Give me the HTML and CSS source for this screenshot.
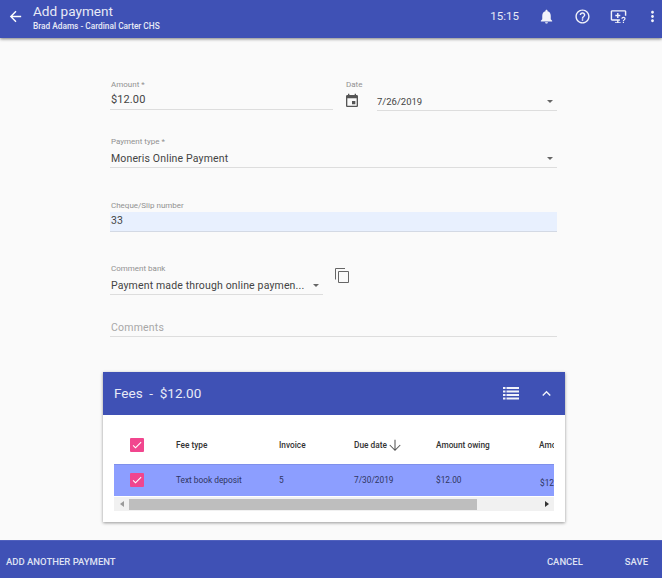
FILE: index.html
```html
<!DOCTYPE html>
<html lang="en">
<head>
	<meta charset="UTF-8">
	<title>Add payment</title>
	<link rel="stylesheet" href="styles.css">
</head>
<body>
	<div class="page">
		<header class="topbar">
			<svg class="back" viewBox="0 0 24 24"><path d="M20 11H7.83l5.59-5.59L12 4l-8 8 8 8 1.41-1.41L7.83 13H20v-2z"/></svg>
			<div class="titles">
				<div class="title">Add payment</div>
				<div class="subtitle">Brad Adams - Cardinal Carter CHS</div>
			</div>
			<div class="clock">15:15</div>
			<svg class="topicon" viewBox="0 0 24 24"><path d="M12 22c1.1 0 2-.9 2-2h-4c0 1.1.9 2 2 2zm6-6v-5c0-3.07-1.63-5.64-4.5-6.32V4c0-.83-.67-1.5-1.5-1.5s-1.5.67-1.5 1.5v.68C7.64 5.36 6 7.92 6 11v5l-2 2v1h16v-1l-2-2z"/></svg>
			<svg class="topicon" viewBox="0 0 24 24"><path d="M11 18h2v-2h-2v2zm1-16C6.48 2 2 6.48 2 12s4.48 10 10 10 10-4.48 10-10S17.52 2 12 2zm0 18c-4.41 0-8-3.59-8-8s3.59-8 8-8 8 3.59 8 8-3.59 8-8 8zm0-14c-2.21 0-4 1.79-4 4h2c0-1.1.9-2 2-2s2 .9 2 2c0 2-3 1.75-3 5h2c0-2.25 3-2.5 3-5 0-2.21-1.79-4-4-4z"/></svg>
			<svg class="topicon" viewBox="0 0 24 24"><path d="M3 3h18c1.1 0 2 .9 2 2v6h-2V5H3v11h11v2h-2v2h3v1H7v-1h3v-2H3c-1.1 0-2-.9-2-2V5c0-1.1.9-2 2-2z"/><path d="M10 7h2v2.5h2.5v2H12V14h-2v-2.5H7.5v-2H10z"/><path d="M19 12.5c-1.7 0-3 1.1-3 2.7h1.7c0-.6.5-1.1 1.3-1.1s1.300.4 1.300 1c0 1.200-2.200 1.200-2.200 3.400h1.700c0-1.500 2.200-1.700 2.200-3.500 0-1.500-1.300-2.500-3-2.500zM18.100 19.300h1.700V21h-1.700z"/></svg>
			<svg class="topicon last" viewBox="0 0 24 24"><path d="M12 8c1.1 0 2-.9 2-2s-.9-2-2-2-2 .9-2 2 .9 2 2 2zm0 2c-1.1 0-2 .9-2 2s.9 2 2 2 2-.9 2-2-.9-2-2-2zm0 6c-1.1 0-2 .9-2 2s.9 2 2 2 2-.9 2-2-.9-2-2-2z"/></svg>
		</header>

		<main class="content">
			<div class="form">
				<div class="row first">
					<div class="field amount">
						<div class="label">Amount *</div>
						<div class="value">$12.00</div>
					</div>
					<div class="datefield">
						<div class="label">Date</div>
						<div class="daterow">
							<svg class="calicon" viewBox="0 0 24 24"><path d="M17 12h-5v5h5v-5zM16 1v2H8V1H6v2H5c-1.11 0-1.99.9-1.99 2L3 19c0 1.1.89 2 2 2h14c1.1 0 2-.9 2-2V5c0-1.1-.9-2-2-2h-1V1h-2zm3 18H5V8h14v11z"/></svg>
							<div class="select dateselect"><span>7/26/2019</span><i class="caret"></i></div>
						</div>
					</div>
				</div>

				<div class="field paytype">
					<div class="label">Payment type *</div>
					<div class="select"><span>Moneris Online Payment</span><i class="caret"></i></div>
				</div>

				<div class="field cheque">
					<div class="label">Cheque/Slip number</div>
					<div class="value filled">33</div>
				</div>

				<div class="row bank">
					<div class="field bankfield">
						<div class="label">Comment bank</div>
						<div class="select"><span>Payment made through online paymen...</span><i class="caret"></i></div>
					</div>
					<svg class="copyicon" viewBox="0 0 15 15"><path d="M.5 11.5V.5H10"/><path d="M3.5 3.5h10v11h-10z"/></svg>
				</div>

				<div class="comments">Comments</div>
			</div>

			<section class="card">
				<div class="cardhead">
					<div class="cardtitle">Fees &nbsp;-&nbsp; $12.00</div>
					<svg class="listicon" viewBox="0 0 16 13"><path d="M0 0h2.5v2H0zM3.5 0H16v2H3.5zM0 3.500h2.500v2H0zM3.500 3.500H16v2H3.500zM0 7h2.500v2H0zM3.500 7H16v2H3.500zM0 10.500h2.500v2H0zM3.500 10.500H16v2H3.500z"/></svg>
					<svg class="chevron" viewBox="0 0 24 24"><path d="M12 8l-6 6 1.41 1.41L12 10.83l4.59 4.58L18 14z"/></svg>
				</div>
				<div class="tablewrap">
					<div class="tr thead">
						<div class="c-check"><span class="check"><svg viewBox="0 0 24 24"><path d="M9 16.2L4.8 12l-1.4 1.4L9 19 21 7l-1.4-1.4z"/></svg></span></div>
						<div class="c-type">Fee type</div>
						<div class="c-inv">Invoice</div>
						<div class="c-due">Due date <svg class="sort" viewBox="0 0 24 24"><path d="M12 3v18M3 12l9 9 9-9"/></svg></div>
						<div class="c-owing">Amount owing</div>
						<div class="c-amt">Amount</div>
					</div>
					<div class="tr tbody">
						<div class="c-check"><span class="check"><svg viewBox="0 0 24 24"><path d="M9 16.2L4.8 12l-1.4 1.4L9 19 21 7l-1.4-1.4z"/></svg></span></div>
						<div class="c-type">Text book deposit</div>
						<div class="c-inv">5</div>
						<div class="c-due">7/30/2019</div>
						<div class="c-owing">$12.00</div>
						<div class="c-amt lower">$12.00</div>
					</div>
					<div class="scrollbar">
						<i class="arrow left"></i>
						<div class="track"><div class="thumb"></div></div>
						<i class="arrow right"></i>
					</div>
				</div>
			</section>
		</main>

		<footer class="bottombar">
			<div class="btn">ADD ANOTHER PAYMENT</div>
			<div class="spacer"></div>
			<div class="btn">CANCEL</div>
			<div class="btn save">SAVE</div>
		</footer>
	</div>
</body>
</html>
```

FILE: styles.css
```css
*{
	box-sizing: border-box;
}
body{
	margin: 0;
	font-family: Roboto, "Liberation Sans", sans-serif;
	background-color: #fafafa;
	color: #333;
}
.page{
	width: 662px;
	height: 578px;
	overflow: hidden;
	display: flex;
	flex-direction: column;
}
.topbar{
	height: 38px;
	flex: none;
	display: flex;
	align-items: center;
	background-color: #3f51b5;
	color: #fff;
	box-shadow: 0 1px 3px rgba(0,0,0,0.5);
	position: relative;
	padding: 0 0 6px 7px;
}
.back{
	width: 17px;
	height: 17px;
	fill: #fff;
}
.titles{
	margin-left: 9px;
	flex: 1;
	margin-top: 2px;
}
.title{
	font-size: 13.6px;
	line-height: 17px;
	color: #e8eaf6;
}
.subtitle{
	font-size: 8.3px;
	line-height: 9px;
	margin-top: 2px;
	font-weight: 500;
	color: #e8eaf6;
}
.clock{
	font-size: 11.5px;
	color: #e8eaf6;
	margin-right: 15px;
}
.topicon{
	width: 17px;
	height: 17px;
	fill: #f2f3fa;
	margin-left: 19px;
}
.clock + .topicon{
	margin-left: 4px;
}
.topicon.last{
	margin-left: 17px;
	margin-right: 1px;
}
.content{
	flex: 1;
	padding: 0 97px 0 103px;
}
.form{
	padding: 40px 8px 0 7px;
}
.row{
	display: flex;
}
.label{
	font-size: 8px;
	line-height: 10px;
	color: #919191;
	padding-left: 1px;
}
.value{
	font-size: 11px;
	line-height: 15px;
	color: #444;
	letter-spacing: 0.1px;
	padding-left: 1px;
}
.first{
	height: 30px;
	margin-top: 2px;
}
.amount{
	width: 223px;
	border-bottom: 1px solid #ddd;
}
.amount .value{
	margin-top: 2px;
}
.datefield{
	margin-left: 12px;
	flex: 1;
}
.daterow{
	display: flex;
	align-items: flex-start;
}
.calicon{
	width: 16px;
	height: 16px;
	fill: #555;
	flex: none;
	margin: 3px 17px 0 -1px;
}
.select{
	height: 17px;
	border-bottom: 1px solid #ddd;
	display: flex;
	align-items: center;
	justify-content: space-between;
	font-size: 10.5px;
	line-height: 15px;
	color: #444;
	letter-spacing: 0.15px;
	padding: 0 4px 0 1px;
}
.dateselect{
	flex: 1;
	height: 19px;
	margin-top: 2px;
	font-size: 9.5px;
	letter-spacing: 0;
	padding-left: 0;
}
.caret{
	width: 0;
	height: 0;
	border-left: 3.5px solid transparent;
	border-right: 3.5px solid transparent;
	border-top: 3.5px solid #666;
}
.paytype{
	margin-top: 27px;
}
.paytype .select{
	height: 18px;
	margin-top: 3px;
}
.cheque{
	margin-top: 33px;
}
.filled{
	background-color: #e8f0fe;
	border-bottom: 1px solid #d3d9e4;
	height: 20px;
	line-height: 18px;
	margin-top: 1px;
	font-size: 10.5px;
}
.bank{
	margin-top: 32px;
}
.bankfield{
	width: 213px;
}
.bankfield .select{
	margin-top: 2px;
	height: 19px;
}
.copyicon{
	width: 15px;
	height: 15px;
	fill: none;
	stroke: #666;
	stroke-width: 1;
	margin: 4px 0 0 12px;
}
.comments{
	margin-top: 26px;
	height: 16px;
	font-size: 10.5px;
	line-height: 14px;
	letter-spacing: 0.2px;
	color: #a8a8a8;
	border-bottom: 1px solid #ddd;
	padding-left: 1px;
}
.card{
	margin-top: 35px;
	width: 462px;
	height: 150px;
	background-color: #fff;
	box-shadow: 0 1px 3px rgba(0,0,0,0.4);
}
.cardhead{
	height: 43px;
	background-color: #3f51b5;
	color: #e8eaf6;
	display: flex;
	align-items: center;
	padding: 0 10px 1px 11px;
}
.cardtitle{
	flex: 1;
	font-size: 13.5px;
}
.listicon{
	width: 16px;
	height: 13px;
	fill: #f2f3fa;
	margin-right: 19px;
}
.chevron{
	width: 17px;
	height: 17px;
	fill: #f2f3fa;
}
.tablewrap{
	margin: 0 11px;
	width: 440px;
	overflow: hidden;
	padding-top: 10px;
}
.tr{
	display: flex;
	align-items: center;
	font-size: 8.3px;
	color: #333;
	white-space: nowrap;
}
.thead{
	height: 39px;
	font-weight: 500;
}
.tbody{
	height: 32px;
	background-color: #8c9eff;
	border-top: 1px solid #7f90ea;
	color: #2f3560;
	padding-bottom: 1px;
}
.c-check{
	width: 62px;
	flex: none;
	padding-left: 16px;
	display: flex;
}
.c-type{
	width: 103px;
	flex: none;
}
.c-inv{
	width: 75px;
	flex: none;
}
.c-due{
	width: 82px;
	flex: none;
	display: flex;
	align-items: center;
}
.c-owing{
	width: 103px;
	flex: none;
}
.c-amt{
	width: 60px;
	flex: none;
}
.lower{
	padding: 6px 0 0 1px;
}
.sort{
	width: 14px;
	height: 14px;
	fill: none;
	stroke: #555;
	stroke-width: 1.8;
	margin-left: 1px;
}
.check{
	width: 14px;
	height: 14px;
	background-color: #f1468e;
	border-radius: 1px;
	display: flex;
}
.check svg{
	width: 14px;
	height: 14px;
	fill: #fff;
	padding: 1px;
}
.scrollbar{
	height: 14px;
	display: flex;
	align-items: center;
	background-color: #f1f1f1;
	margin-top: 1px;
}
.arrow{
	width: 15px;
	flex: none;
	display: flex;
	justify-content: center;
}
.arrow::before{
	content: "";
	border-top: 3.5px solid transparent;
	border-bottom: 3.5px solid transparent;
}
.arrow.left::before{
	border-right: 4px solid #9a9a9a;
}
.arrow.right::before{
	border-left: 4px solid #333;
}
.track{
	flex: 1;
	height: 11px;
}
.thumb{
	width: 348px;
	height: 11px;
	background-color: #bebebe;
}
.bottombar{
	height: 38px;
	flex: none;
	display: flex;
	align-items: center;
	background-color: #3f51b5;
	color: #dfe2f3;
	font-size: 9.5px;
	font-weight: 500;
	padding: 4px 14px 0 6px;
	border-top: 1px solid #5161be;
}
.spacer{
	flex: 1;
}
.save{
	margin-left: 42px;
}
```
